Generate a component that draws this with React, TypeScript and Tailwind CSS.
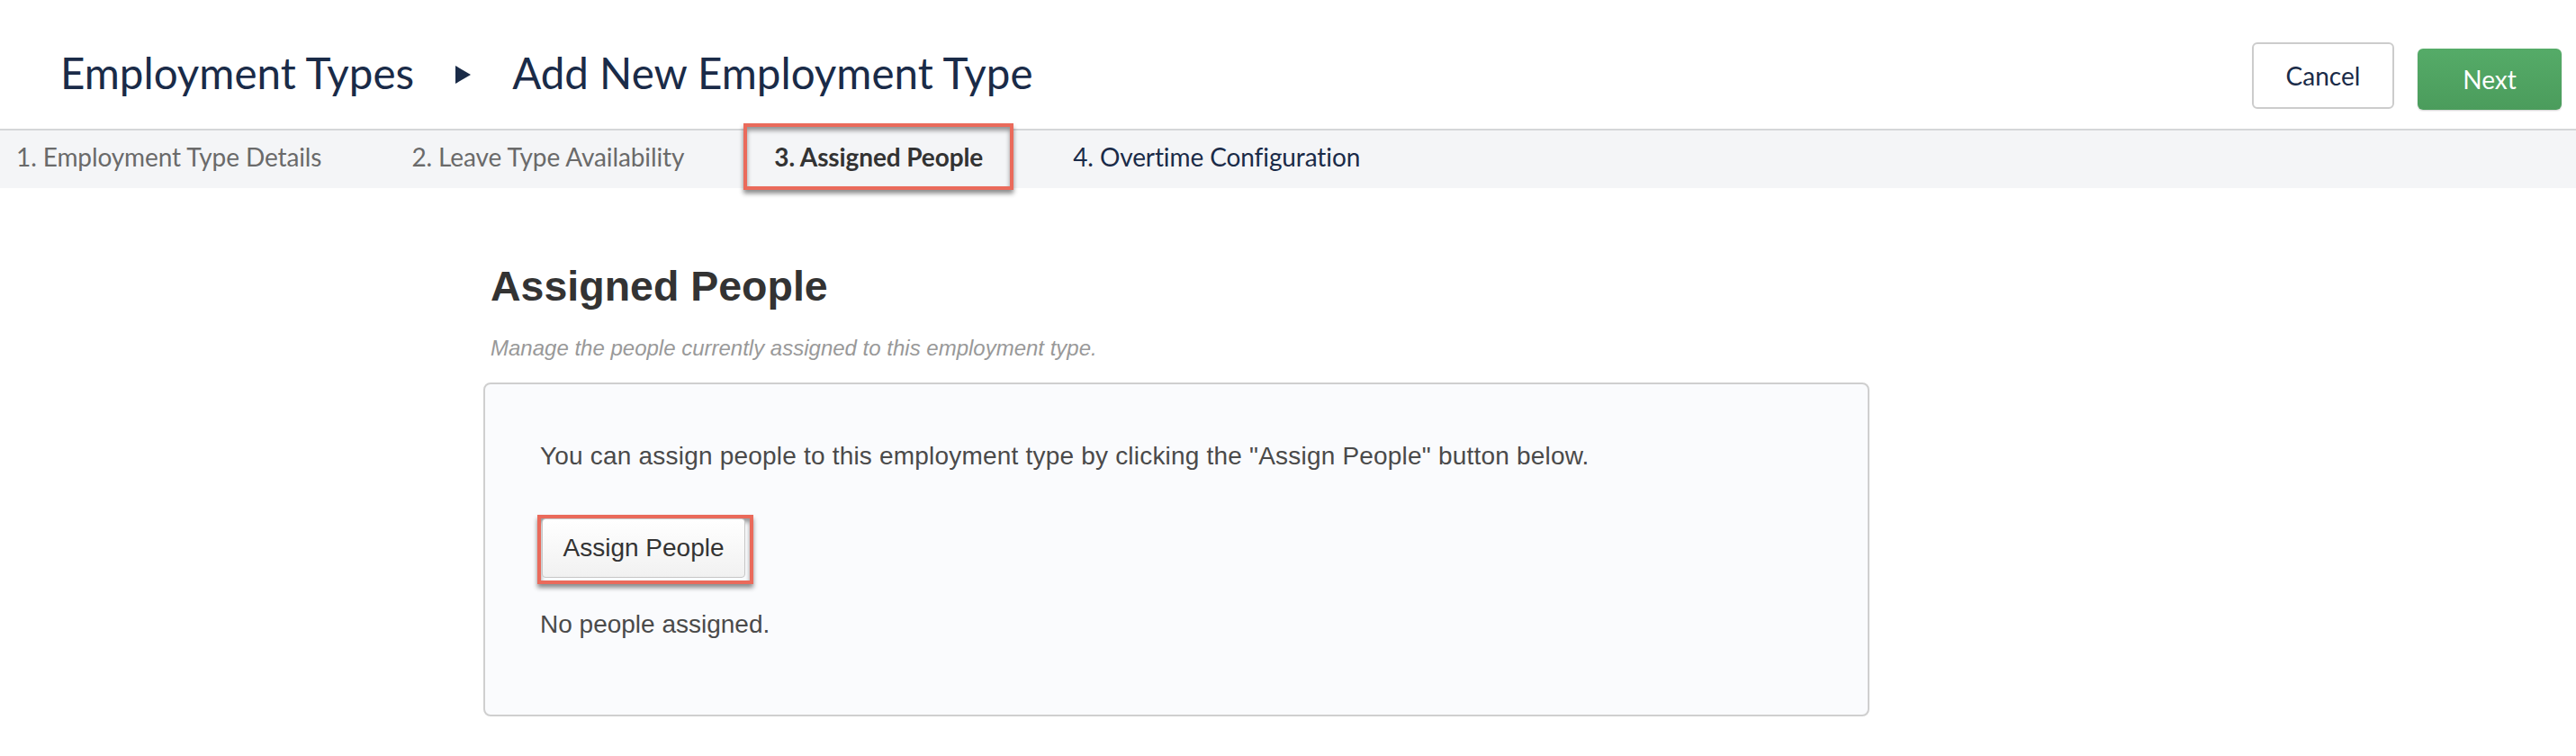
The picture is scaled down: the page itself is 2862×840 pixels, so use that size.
import React from 'react'

const tabs = [
  { label: '1. Employment Type Details', state: 'done' },
  { label: '2. Leave Type Availability', state: 'done' },
  { label: '3. Assigned People', state: 'active' },
  { label: '4. Overtime Configuration', state: 'next' },
]

const highlight =
  'border-4 border-[#ea6a5b] shadow-[0_4px_5px_rgba(0,0,0,0.45),inset_0_4px_5px_rgba(0,0,0,0.4)]'

function Header() {
  return (
    <header className="flex h-[145px] justify-between border-b-2 border-[#d5d6d8] pl-[67px] pr-[16px] font-['Lato',sans-serif]">
      <div className="mt-[56px] flex h-[50px] items-center gap-[46px] text-[47.5px] leading-[50px] text-[#1a2b48]">
        <span>Employment Types</span>
        <svg width="17" height="20" viewBox="0 0 17 20" className="mt-[3px]">
          <polygon points="0,0 17,10 0,20" fill="#1a2b48" />
        </svg>
        <span>Add New Employment Type</span>
      </div>
      <div className="flex items-start">
        <button className="mt-[47px] h-[74px] w-[158px] rounded-[6px] border-2 border-[#cccccc] bg-white text-[28px] text-[#1a2b48]">
          Cancel
        </button>
        <button className="ml-[26px] mt-[54px] h-[68px] w-[160px] rounded-[6px] bg-gradient-to-b from-[#55ab68] to-[#4b9c5c] text-[28px] text-white shadow-[0_1px_2px_rgba(0,0,0,0.2)]">
          Next
        </button>
      </div>
    </header>
  )
}

function Steps() {
  return (
    <nav className="flex h-[64px] items-start gap-[32px] bg-[#f4f5f7] font-['Lato',sans-serif] text-[28px] leading-[28px] tracking-[-0.1px]">
      {tabs.map((t, i) => {
        if (t.state === 'active') {
          return (
            <div
              key={t.label}
              className={`relative z-10 -mt-[8px] h-[74px] bg-[#f4f5f7] px-[30px] pt-[19px] font-bold text-[#333333] ${highlight}`}
            >
              {t.label}
            </div>
          )
        }
        return (
          <div
            key={t.label}
            className={`${i === 0 ? 'pl-[18px]' : 'pl-[34px]'} pr-[34px] pt-[15px] ${
              t.state === 'next' ? 'text-[#1a2b48]' : 'text-[#6a6a6a]'
            }`}
          >
            {t.label}
          </div>
        )
      })}
    </nav>
  )
}

export default function App() {
  return (
    <div className="h-[840px] w-[2862px] bg-white">
      <Header />
      <Steps />

      <main className="ml-[537px] w-[1540px] font-['Liberation_Sans',Arial,sans-serif]">
        <div className="pl-[8px]">
          <h1 className="mt-[86px] text-[46.5px] font-bold leading-[47px] text-[#333333]">Assigned People</h1>
          <p className="mt-[33px] text-[24px] italic leading-[24px] text-[#999999]">
            Manage the people currently assigned to this employment type.
          </p>
        </div>

        <section className="mt-[26px] h-[371px] rounded-[8px] border-2 border-[#cfcfcf] bg-[#fafbfd] pl-[61px] pt-[66px] text-[28px] leading-[28px] text-[#4a4a4a]">
          <p className="tracking-[0.2px]">
            You can assign people to this employment type by clicking the "Assign People" button below.
          </p>

          <div className={`-ml-[3px] mt-[51px] inline-flex pb-[3px] pl-[1px] pr-[5px] ${highlight}`}>
            <button className="h-[66px] w-[226px] rounded-[4px] border border-[#c6c6c6] bg-gradient-to-b from-white to-[#f1f1f1] text-[28px] text-[#333333]">
              Assign People
            </button>
          </div>

          <p className="mt-[31px]">No people assigned.</p>
        </section>
      </main>
    </div>
  )
}
